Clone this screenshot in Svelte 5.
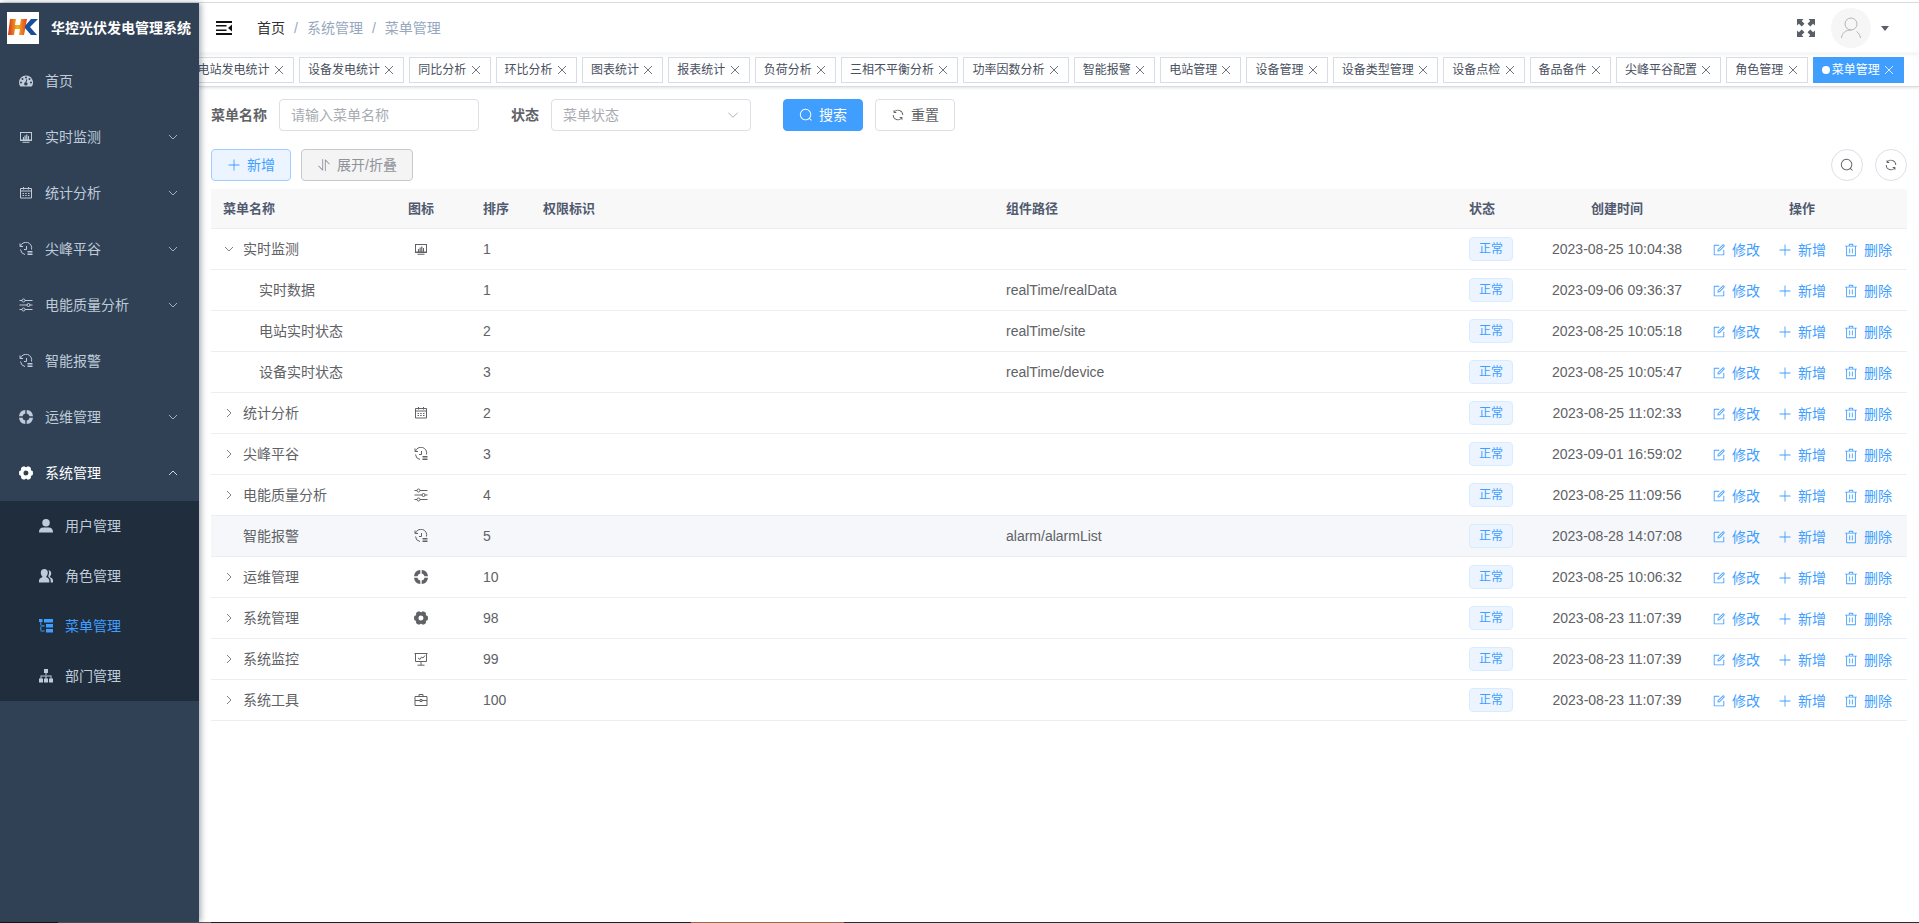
<script>
  const icons = {
    plus: { box: 1024, fill: 'M480 480V128a32 32 0 0 1 64 0v352h352a32 32 0 1 1 0 64H544v352a32 32 0 1 1-64 0V544H128a32 32 0 0 1 0-64z' },
    edit: {
      box: 1024,
      fill: 'M832 512a32 32 0 1 1 64 0v352a32 32 0 0 1-32 32H160a32 32 0 0 1-32-32V160a32 32 0 0 1 32-32h352a32 32 0 0 1 0 64H192v640h640zM469.952 554.24l52.8-7.552L847.104 222.4a32 32 0 1 0-45.248-45.248L477.44 501.44l-7.552 52.8zm422.4-422.4a96 96 0 0 1 0 135.808l-331.84 331.84a32 32 0 0 1-18.112 9.088L436.8 623.68a32 32 0 0 1-36.224-36.224l15.104-105.6a32 32 0 0 1 9.024-18.112l331.904-331.84a96 96 0 0 1 135.744 0z'
    },
    trash: {
      box: 1024,
      fill: 'M160 256H96a32 32 0 0 1 0-64h256V95.936a32 32 0 0 1 32-32h256a32 32 0 0 1 32 32V192h256a32 32 0 1 1 0 64h-64v672a32 32 0 0 1-32 32H192a32 32 0 0 1-32-32zm448-64v-64H416v64zM224 896h576V256H224zm192-128a32 32 0 0 1-32-32V416a32 32 0 0 1 64 0v320a32 32 0 0 1-32 32m192 0a32 32 0 0 1-32-32V416a32 32 0 0 1 64 0v320a32 32 0 0 1-32 32'
    },
    search: { box: 1024, fill: 'm795.904 750.72 124.992 124.928a32 32 0 0 1-45.248 45.248L750.656 795.904a416 416 0 1 1 45.248-45.248zM480 832a352 352 0 1 0 0-704 352 352 0 0 0 0 704' },
    refresh: {
      box: 1024,
      fill: 'M771.776 794.88A384 384 0 0 1 128 512h64a320 320 0 0 0 555.712 216.448H654.72a32 32 0 1 1 0-64h149.056a32 32 0 0 1 32 32v148.928a32 32 0 1 1-64 0v-50.56zM276.288 295.616h92.992a32 32 0 0 1 0 64H220.16a32 32 0 0 1-32-32V178.56a32 32 0 0 1 64 0v50.56A384 384 0 0 1 896.128 512h-64a320 320 0 0 0-555.776-216.384z'
    },
    sort: {
      box: 1024,
      fill: 'M384 96a32 32 0 0 1 64 0v786.752a32 32 0 0 1-54.592 22.656L95.936 608a32 32 0 0 1 0-45.312h.128a32 32 0 0 1 45.184 0L384 805.632zm192 45.248a32 32 0 0 1 54.592-22.592L928.064 416a32 32 0 0 1 0 45.312h-.128a32 32 0 0 1-45.184 0L640 218.496V928a32 32 0 1 1-64 0z'
    },
    down: { box: 12, line: 'M2 4l4 4 4-4' },
    up: { box: 12, line: 'M2 8l4-4 4 4' },
    right: { box: 12, line: 'M4 2l4 4-4 4' },
    close: { box: 12, line: 'M2 2l8 8M10 2l-8 8' },
    dashboard: {
      box: 14,
      fill: 'M7 1.5a7 7 0 0 0-7 7c0 1.4.4 2.7 1.1 3.8.1.1.2.2.4.2h11c.2 0 .3-.1.4-.2A7 7 0 0 0 7 1.5zM2 9.5a1 1 0 1 1 0-2 1 1 0 0 1 0 2zm1.5-3.5a1 1 0 1 1 0-2 1 1 0 0 1 0 2zM7 4.5a1 1 0 1 1 0-2 1 1 0 0 1 0 2zm1.4 4.7a1.700 1.700 0 1 1-1.900-1l.8-3 1 .3-.8 3c.4.1.7.4.9.7zm2.100-3.200a1 1 0 1 1 0-2 1 1 0 0 1 0 2zM12 9.500a1 1 0 1 1 0-2 1 1 0 0 1 0 2z'
    },
    chart: {
      box: 14,
      fill: 'M1 2h12v9H1zM2 3v6.500h10V3zM4 7h1v2.500H4zM5.500 5.500h1.200v4H5.500zM7.200 4.500h1.200v5H7.200zM9 6h1v3.500H9zM3.500 11.800h7v1h-7z'
    },
    calendar: { box: 14, line: 'M1.5 2.5h11v9.500h-11zM1.5 5h11M4.5 1v2.500M9.5 1v2.500M3.5 7.500h1.500M6.200 7.500h1.500M9 7.500h1.500M3.500 9.500h1.500M6.200 9.500h1.500M9 9.500h1.500' },
    history: { box: 14, line: 'M1 1.500v3h3M1.400 4.500A5.500 5.500 0 0 1 12.500 7.500M1.500 7.500a5.500 5.500 0 0 0 4.500 5M7.500 4v3.500H5M8.500 9.500h5M8.500 11h5M8.500 12.500h5' },
    sliders: {
      box: 14,
      line: 'M.5 2.5H3M6 2.5h7.500M.5 7H8M11 7h2.500M.5 11.500H3M6 11.500h7.500M6 2.500a1.500 1.500 0 1 1-3 0 1.500 1.500 0 0 1 3 0zM11 7a1.500 1.500 0 1 1-3 0 1.500 1.500 0 0 1 3 0zM6 11.500a1.500 1.500 0 1 1-3 0 1.500 1.500 0 0 1 3 0z'
    },
    ring: {
      box: 14,
      fill: 'M6.300 0v3.500A3.500 3.500 0 0 0 3.500 6.300H0A7 7 0 0 1 6.300 0zM7.700 0A7 7 0 0 1 14 6.300h-3.500A3.500 3.500 0 0 0 7.700 3.500zM14 7.700A7 7 0 0 1 7.700 14v-3.500a3.500 3.500 0 0 0 2.800-2.800zM6.300 14A7 7 0 0 1 0 7.700h3.500a3.500 3.500 0 0 0 2.800 2.800z'
    },
    gear: {
      box: 14,
      fill: 'M13.7 5.1Q14.2 7 13.7 8.9Q11.2 9.4 12 11.9Q10.5 13.6 8.700 13.800Q7 11.900 5.300 13.800Q3.500 13.600 2 11.900Q2.800 9.400.3 8.900Q-.2 7 .3 5.100Q2.800 4.600 2 2.100Q3.500.4 5.300.2Q7 2.100 8.700.2Q10.500.4 12 2.100Q11.200 4.600 13.700 5.100zM7 4.500a2.500 2.500 0 1 0 0 5 2.500 2.500 0 0 0 0-5z'
    },
    board: { box: 14, line: 'M.5 1.500h13M1.500 1.500v8h11v-8M4 6l2 1.500L7.500 5 9 6l2-2.500M7 9.500v3.500M3.500 13.200h7' },
    toolbox: { box: 14, line: 'M1 3.500h12v9H1zM5 3.500V1.500h4v2M1 7.500h5M8 7.500h5M6 6.500h2v2H6z' },
    user: { box: 14, fill: 'M7 0a3.700 3.700 0 1 1 0 7.500A3.700 3.700 0 0 1 7 0zM4.300 8.500h5.400C12.500 8.500 14 10.500 14 13v.5H0V13c0-2.500 1.500-4.500 4.300-4.500z' },
    users: {
      box: 14,
      fill: 'M5.300 0a3.500 3.500 0 0 1 3.500 3.700c0 1.500-.6 2.800-1.500 3.600v1c1.800.6 3 1.700 3 3.500V13.500H0v-1.700c0-1.800 1.500-2.900 3.300-3.500v-1C2.400 6.500 1.800 5.200 1.800 3.700A3.500 3.500 0 0 1 5.300 0zM9.500 1.200c1.700.2 2.700 1.300 2.700 3 0 1.400-.5 2.500-1.200 3.200v.8c1.800.5 3 1.500 3 3.300v2h-2.300v-1.700c0-1.700-.9-3-2.300-3.800V6.500c.8-1.700 1-3.600.1-5.300z'
    },
    tree: { box: 14, fill: 'M0 0h3.500v3H0zM5 0h9v3.500H5zM7 5h7v3.500H7zM7 10h7v3.500H7zM1.300 3h1v9.300H1.300zM1.300 6.200H5.500v1.200H1.300zM1.300 11.500H5.500v1H1.300z' },
    org: { box: 14, fill: 'M5 0h4v4H5zM6.500 4h1v3h-1zM1.500 6.500h11v1h-11zM1.500 7.500h1v2h-1zM6.500 7.500h1v2h-1zM11.500 7.500h1v2h-1zM0 9.500h4v4H0zM5 9.500h4v4H5zM10 9.500h4v4h-4z' },
    fold: { box: 16, fill: 'M0 1h16v2H0zM0 5h10.500v1.500H0zM0 9.500h10.500V11H0zM0 13h16v2H0zM16 4.500v7L12 8z' },
    expand: {
      box: 18,
      fill: 'M0 0h6.500L4.700 1.900 7.500 4.700 4.700 7.500 1.900 4.700 0 6.500zM18 0v6.500l-1.900-1.800-2.800 2.800-2.800-2.800 2.800-2.800L11.500 0zM0 18v-6.500l1.900 1.800 2.800-2.800 2.800 2.800-2.800 2.800L6.500 18zM18 18h-6.500l1.800-1.900-2.800-2.800 2.800-2.800 2.800 2.800 1.900-1.800z'
    }
  };

  const menu = [
    { title: '首页', icon: 'dashboard' },
    { title: '实时监测', icon: 'chart', arrow: 'down' },
    { title: '统计分析', icon: 'calendar', arrow: 'down' },
    { title: '尖峰平谷', icon: 'history', arrow: 'down' },
    { title: '电能质量分析', icon: 'sliders', arrow: 'down' },
    { title: '智能报警', icon: 'history' },
    { title: '运维管理', icon: 'ring', arrow: 'down' },
    { title: '系统管理', icon: 'gear', arrow: 'up' }
  ];

  const subMenu = [
    { title: '用户管理', icon: 'user' },
    { title: '角色管理', icon: 'users' },
    { title: '菜单管理', icon: 'tree' },
    { title: '部门管理', icon: 'org' }
  ];

  const tags = [
    '电站发电统计', '设备发电统计', '同比分析', '环比分析', '图表统计', '报表统计',
    '负荷分析', '三相不平衡分析', '功率因数分析', '智能报警', '电站管理', '设备管理',
    '设备类型管理', '设备点检', '备品备件', '尖峰平谷配置', '角色管理', '菜单管理'
  ];

  const rows = [
    { name: '实时监测', icon: 'chart', sort: 1, arrow: 'down', time: '2023-08-25 10:04:38' },
    { name: '实时数据', sort: 1, child: true, path: 'realTime/realData', time: '2023-09-06 09:36:37' },
    { name: '电站实时状态', sort: 2, child: true, path: 'realTime/site', time: '2023-08-25 10:05:18' },
    { name: '设备实时状态', sort: 3, child: true, path: 'realTime/device', time: '2023-08-25 10:05:47' },
    { name: '统计分析', icon: 'calendar', sort: 2, arrow: 'right', time: '2023-08-25 11:02:33' },
    { name: '尖峰平谷', icon: 'history', sort: 3, arrow: 'right', time: '2023-09-01 16:59:02' },
    { name: '电能质量分析', icon: 'sliders', sort: 4, arrow: 'right', time: '2023-08-25 11:09:56' },
    { name: '智能报警', icon: 'history', sort: 5, path: 'alarm/alarmList', time: '2023-08-28 14:07:08', current: true },
    { name: '运维管理', icon: 'ring', sort: 10, arrow: 'right', time: '2023-08-25 10:06:32' },
    { name: '系统管理', icon: 'gear', sort: 98, arrow: 'right', time: '2023-08-23 11:07:39' },
    { name: '系统监控', icon: 'board', sort: 99, arrow: 'right', time: '2023-08-23 11:07:39' },
    { name: '系统工具', icon: 'toolbox', sort: 100, arrow: 'right', time: '2023-08-23 11:07:39' }
  ];

  let active = $state('菜单管理');
  let menuName = $state('');
  let status = $state('');

  function reset() {
    menuName = '';
    status = '';
  }
</script>

{#snippet icon(name)}
  <svg class="icon icon-{name}" viewBox="0 0 {icons[name].box} {icons[name].box}" aria-hidden="true">
    {#if icons[name].fill}
      <path d={icons[name].fill} fill="currentColor" fill-rule="evenodd" />
    {/if}
    {#if icons[name].line}
      <path d={icons[name].line} fill="none" stroke="currentColor" stroke-width={icons[name].box === 12 ? 0.8 : 1} />
    {/if}
  </svg>
{/snippet}

<div class="app">
  <div class="top-edge"></div>

  <div class="layout">
    <aside class="sidebar">
      <a class="logo" href="#home">
        <svg class="logo-img" viewBox="0 0 32 32" aria-hidden="true">
          <defs>
            <linearGradient id="flame">
              <stop offset="0" stop-color="#d8321f" />
              <stop offset="0.5" stop-color="#f5b21d" />
              <stop offset="1" stop-color="#e2401f" />
            </linearGradient>
          </defs>
          <rect width="32" height="32" fill="#fff" />
          <path d="M3 7h6l-1 6h5l1-6h6l-3 16h-5l1-6H8l-1 6H1z" fill="url(#flame)" />
          <path d="M24 7h7l-8 8 7 8h-6l-6-7v-2z" fill="#174f9c" />
        </svg>
        <h1>华控光伏发电管理系统</h1>
      </a>

      <nav>
        {#each menu as item}
          <a class="menu-item" class:open={item.arrow === 'up'} href="#{item.title}">
            {@render icon(item.icon)}
            <span class="menu-title">{item.title}</span>
            {#if item.arrow}{@render icon(item.arrow)}{/if}
          </a>
        {/each}
        <div class="sub-menu">
          {#each subMenu as item}
            <a class="menu-item" class:active={item.title === active} href="#{item.title}">
              {@render icon(item.icon)}
              <span class="menu-title">{item.title}</span>
            </a>
          {/each}
        </div>
      </nav>
    </aside>

    <div class="main">
      <header class="navbar">
        <button class="hamburger" aria-label="折叠菜单">{@render icon('fold')}</button>
        <div class="breadcrumb">
          <a href="#home">首页</a>
          <span class="sep">/</span>
          <span>系统管理</span>
          <span class="sep">/</span>
          <span>菜单管理</span>
        </div>
        <button class="fullscreen" aria-label="全屏">{@render icon('expand')}</button>
        <button class="avatar" aria-label="个人中心">
          <svg class="avatar-img" viewBox="0 0 40 40" aria-hidden="true">
            <circle cx="20" cy="20" r="20" fill="#f6f6f6" />
            <g fill="none" stroke="#b5b5b5">
              <circle cx="20" cy="16" r="6" />
              <path d="M10.500 30c.5-5 4-8 9.500-8M25.500 23.500c2.300 1.500 3.700 3.800 4 6.500" />
            </g>
          </svg>
          <span class="caret"></span>
        </button>
      </header>

      <div class="tags-view">
        {#each tags as tag}
          <span class="tag" class:active={tag === active}>
            <a href="#{tag}">{tag}</a> <button aria-label="关闭 {tag}">{@render icon('close')}</button>
          </span>
        {/each}
      </div>

      <main class="content">
        <form class="query" onsubmit={(e) => e.preventDefault()}>
          <div class="field">
            <label for="menu-name">菜单名称</label>
            <input id="menu-name" type="text" placeholder="请输入菜单名称" bind:value={menuName} />
          </div>
          <div class="field">
            <label for="menu-status">状态</label>
            <div class="select">
              <select id="menu-status" bind:value={status}>
                <option value="">菜单状态</option>
                <option value="0">正常</option>
                <option value="1">停用</option>
              </select>
              {@render icon('down')}
            </div>
          </div>
          <div class="buttons">
            <button class="btn primary" type="submit">{@render icon('search')}搜索</button>
            <button class="btn" type="button" onclick={reset}>{@render icon('refresh')}重置</button>
          </div>
        </form>

        <div class="toolbar">
          <div class="buttons">
            <button class="btn plain-primary">{@render icon('plus')}新增</button>
            <button class="btn plain-info">{@render icon('sort')}展开/折叠</button>
          </div>
          <div class="buttons">
            <button class="btn circle" aria-label="隐藏搜索">{@render icon('search')}</button>
            <button class="btn circle" aria-label="刷新">{@render icon('refresh')}</button>
          </div>
        </div>

        <table>
          <colgroup>
            <col class="w160" />
            <col class="w100" />
            <col class="w60" />
            <col />
            <col />
            <col class="w80" />
            <col class="w160" />
            <col class="w210" />
          </colgroup>
          <thead>
            <tr>
              <th>菜单名称</th>
              <th class="center">图标</th>
              <th>排序</th>
              <th>权限标识</th>
              <th>组件路径</th>
              <th>状态</th>
              <th class="center">创建时间</th>
              <th class="center">操作</th>
            </tr>
          </thead>
          <tbody>
            {#each rows as row}
              <tr class:current={row.current}>
                <td>
                  <div class="name" class:child={row.child}>
                    <span class="expander">{#if row.arrow}{@render icon(row.arrow)}{/if}</span>
                    {row.name}
                  </div>
                </td>
                <td class="center">{#if row.icon}{@render icon(row.icon)}{/if}</td>
                <td>{row.sort}</td>
                <td></td>
                <td>{row.path ?? ''}</td>
                <td><span class="status">正常</span></td>
                <td class="center">{row.time}</td>
                <td>
                  <div class="ops">
                    <button>{@render icon('edit')}修改</button>
                    <button>{@render icon('plus')}新增</button>
                    <button>{@render icon('trash')}删除</button>
                  </div>
                </td>
              </tr>
            {/each}
          </tbody>
        </table>
      </main>
    </div>
  </div>

  <div class="bottom-edge"></div>
</div>

<style>
  :global(body) {
    margin: 0;
    background: #fff;
  }

  .app,
  .app button,
  .app input,
  .app select {
    font-family: 'Liberation Sans', 'Noto Sans CJK SC', sans-serif;
    font-size: 14px;
    line-height: 20px;
  }

  .app {
    display: flex;
    flex-direction: column;
    min-height: 100vh;
    color: #606266;
  }

  .app * {
    box-sizing: border-box;
  }

  a {
    color: inherit;
    text-decoration: none;
  }

  button {
    padding: 0;
    border: none;
    background: none;
    color: inherit;
    cursor: pointer;
  }

  .icon {
    flex: none;
    width: 14px;
    height: 14px;
    vertical-align: middle;
  }

  .top-edge {
    height: 3px;
    border-bottom: 1px solid #dcdfe6;
  }

  .bottom-edge {
    height: 1px;
    background: linear-gradient(90deg, #141618 3%, #54595a 3%, #54595a 11%, #1b1d1f 11%, #1b1d1f 36%, #9a6b45 36%, #9a6b45 44%, #2a2d2f 44%);
  }

  .layout {
    flex: 1;
    display: flex;
  }

  .sidebar {
    flex: none;
    width: 199px;
    background: #304156;
    box-shadow: 2px 0 6px rgba(0, 21, 41, 0.35);
    z-index: 2;
  }

  .logo {
    display: flex;
    align-items: center;
    gap: 12px;
    height: 50px;
    padding-left: 7px;
    color: #fff;
  }

  .logo-img {
    width: 32px;
    height: 32px;
  }

  h1 {
    margin: 0;
    font-size: 14px;
    font-weight: 700;
    white-space: nowrap;
  }

  .menu-item {
    display: flex;
    align-items: center;
    gap: 12px;
    height: 56px;
    padding: 0 20px 0 19px;
    color: #bfcbd9;
  }

  .menu-item.open {
    color: #fff;
  }

  .menu-title {
    flex: 1;
  }

  .menu-item .icon-down,
  .menu-item .icon-up {
    width: 12px;
    height: 12px;
  }

  .sub-menu {
    background: #1f2d3d;
  }

  .sub-menu .menu-item {
    height: 50px;
    padding-left: 39px;
  }

  .sub-menu .menu-item.active {
    color: #409eff;
  }

  .main {
    flex: 1;
    min-width: 0;
  }

  .navbar {
    display: flex;
    align-items: center;
    height: 50px;
    padding-right: 30px;
    box-shadow: 0 1px 4px rgba(0, 21, 41, 0.08);
  }

  .hamburger {
    padding: 0 17px;
    color: #111;
  }

  .hamburger .icon {
    display: block;
    width: 16px;
    height: 16px;
  }

  .breadcrumb {
    flex: 1;
    display: flex;
    align-items: center;
    gap: 9px;
    padding-left: 8px;
    color: #97a8be;
  }

  .breadcrumb a {
    color: #303133;
  }

  .fullscreen {
    margin-right: 16px;
    color: #5a5e66;
  }

  .fullscreen .icon {
    display: block;
    width: 18px;
    height: 18px;
  }

  .avatar {
    display: flex;
    align-items: center;
    gap: 10px;
  }

  .avatar-img {
    width: 40px;
    height: 40px;
  }

  .caret {
    border: 4px solid transparent;
    border-top: 5px solid #5a5e66;
    border-bottom: none;
  }

  .tags-view {
    display: flex;
    justify-content: flex-end;
    align-items: center;
    gap: 5px;
    height: 34px;
    padding-right: 15px;
    overflow: hidden;
    border-bottom: 1px solid #d8dce5;
    box-shadow: 0 1px 3px rgba(0, 0, 0, 0.12);
  }

  .tag {
    flex: none;
    height: 26px;
    padding: 0 8px;
    border: 1px solid #d8dce5;
    background: #fff;
    color: #495060;
    font-size: 12px;
    line-height: 24px;
    white-space: nowrap;
  }

  .tag .icon {
    width: 12px;
    height: 12px;
  }

  .tag.active {
    border-color: #409eff;
    background: #409eff;
    color: #fff;
  }

  .tag.active::before {
    content: '';
    display: inline-block;
    width: 8px;
    height: 8px;
    margin-right: 2px;
    border-radius: 50%;
    background: #fff;
  }

  .content {
    padding: 12px;
  }

  .query {
    display: flex;
    flex-wrap: wrap;
    gap: 18px 32px;
    margin-bottom: 18px;
  }

  .field {
    display: flex;
    align-items: center;
    gap: 12px;
  }

  label {
    font-weight: 700;
  }

  input,
  select {
    width: 200px;
    height: 32px;
    padding: 0 11px;
    border: 1px solid #dcdfe6;
    border-radius: 4px;
    background: #fff;
    color: #a8abb2;
    appearance: none;
  }

  input {
    color: #606266;
  }

  input::placeholder {
    color: #a8abb2;
  }

  .select {
    display: grid;
    align-items: center;
  }

  .select select,
  .select .icon {
    grid-area: 1 / 1;
  }

  .select .icon {
    justify-self: end;
    margin-right: 11px;
    color: #a8abb2;
    pointer-events: none;
  }

  .buttons {
    display: flex;
    gap: 12px;
  }

  .btn {
    display: inline-flex;
    align-items: center;
    justify-content: center;
    gap: 6px;
    height: 32px;
    padding: 0 15px;
    border: 1px solid #dcdfe6;
    border-radius: 4px;
    background: #fff;
  }

  .btn.primary {
    border-color: #409eff;
    background: #409eff;
    color: #fff;
  }

  .btn.plain-primary {
    border-color: #a0cfff;
    background: #ecf5ff;
    color: #409eff;
  }

  .btn.plain-info {
    border-color: #c8c9cc;
    background: #f4f4f5;
    color: #909399;
  }

  .btn.circle {
    width: 32px;
    padding: 0;
    border-radius: 50%;
  }

  .toolbar {
    display: flex;
    justify-content: space-between;
    margin-bottom: 8px;
  }

  .toolbar .buttons:first-child {
    gap: 10px;
  }

  table {
    width: 100%;
    table-layout: fixed;
    border-spacing: 0;
  }

  .w60 {
    width: 60px;
  }

  .w80 {
    width: 80px;
  }

  .w100 {
    width: 100px;
  }

  .w160 {
    width: 160px;
  }

  .w210 {
    width: 210px;
  }

  th,
  td {
    height: 41px;
    padding: 0 12px;
    border-bottom: 1px solid #ebeef5;
    line-height: 24px;
    text-align: left;
    white-space: nowrap;
  }

  th {
    height: 40px;
    background: #f8f8f9;
    color: #515a6e;
    font-size: 13px;
    font-weight: 700;
  }

  .center {
    text-align: center;
  }

  .center .icon {
    display: block;
    margin: 0 auto;
  }

  .current td {
    background: #f5f7fa;
  }

  .name {
    display: flex;
    align-items: center;
  }

  .name.child {
    padding-left: 16px;
  }

  .expander {
    display: flex;
    width: 20px;
  }

  .expander .icon {
    width: 12px;
    height: 12px;
  }

  .status {
    display: block;
    width: 44px;
    height: 24px;
    border: 1px solid #d9ecff;
    border-radius: 4px;
    background: #ecf5ff;
    color: #409eff;
    font-size: 12px;
    line-height: 22px;
    text-align: center;
  }

  .ops {
    display: flex;
    justify-content: center;
    gap: 18px;
    padding-top: 2px;
  }

  .ops button {
    display: inline-flex;
    align-items: center;
    gap: 6px;
    color: #409eff;
  }
</style>
